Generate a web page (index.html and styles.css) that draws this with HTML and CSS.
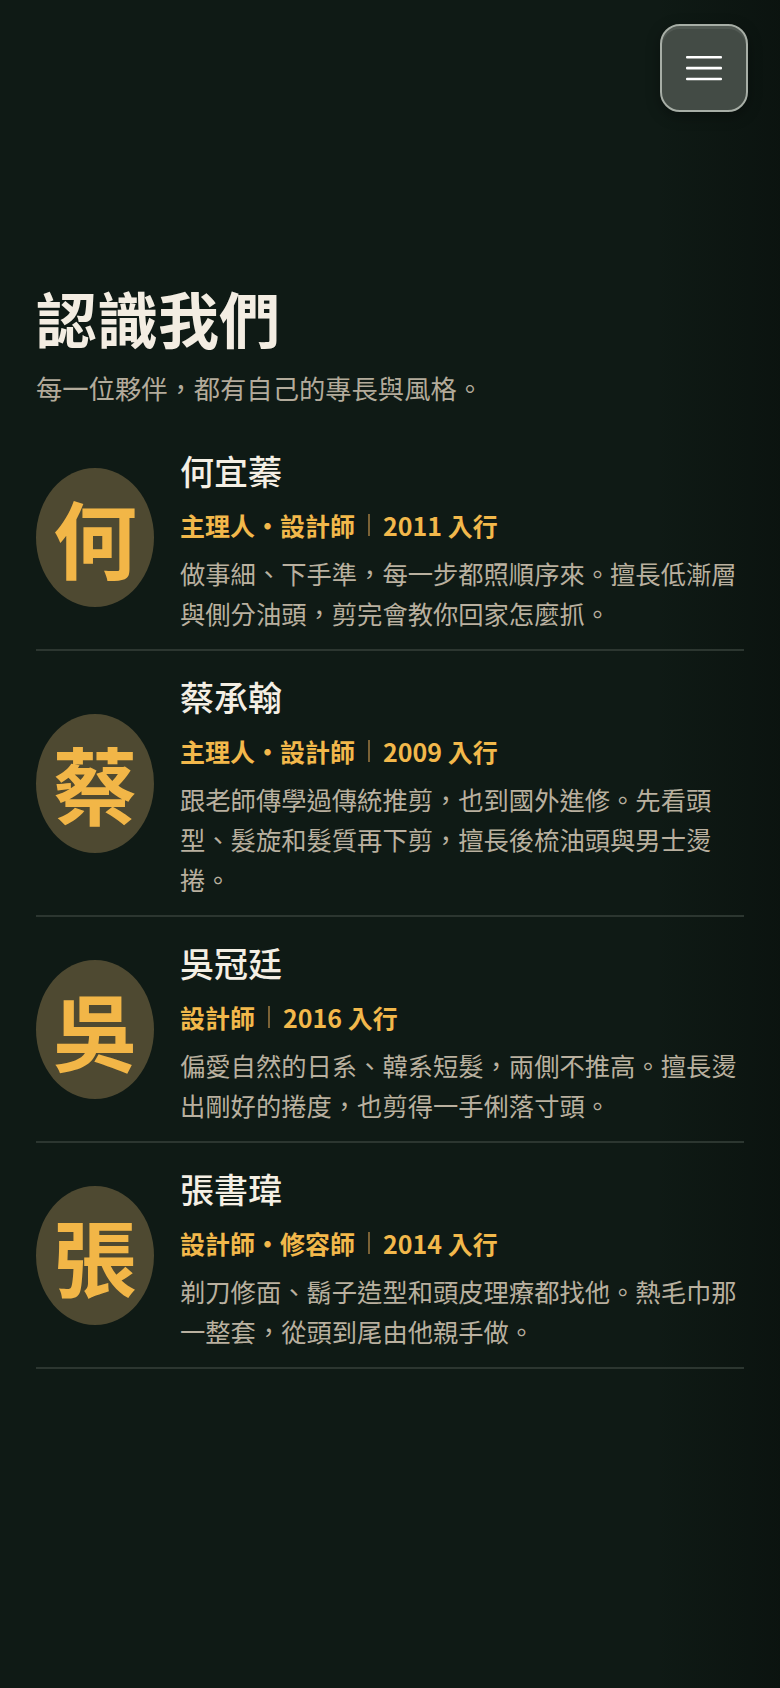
FILE: index.html
```html
<!DOCTYPE html>
<html lang="zh-Hant">
<head>
    <meta charset="utf-8">
    <title>認識我們</title>
    <link rel="stylesheet" href="styles.css">
</head>
<body>
    <header class="topbar">
        <button class="menu-btn" aria-label="選單">
            <svg width="36" height="26" viewBox="0 0 36 26">
                <rect x="0" y="1" width="36" height="2.5" rx="1" fill="#ffffff"/>
                <rect x="0" y="11.8" width="36" height="2.6" rx="1" fill="#ffffff"/>
                <rect x="0" y="22.7" width="36" height="2.5" rx="1" fill="#ffffff"/>
            </svg>
        </button>
    </header>

    <main class="team">
        <h1 class="team-title">認識我們</h1>
        <p class="team-sub">每一位夥伴，都有自己的專長與風格。</p>

        <ul class="member-list">
            <li class="member">
                <div class="avatar">何</div>
                <div class="info">
                    <h2 class="name">何宜蓁</h2>
                    <p class="role">主理人・設計師<span class="bar"></span>2011 入行</p>
                    <p class="desc">做事細、下手準，每一步都照順序來。擅長低漸層與側分油頭，剪完會教你回家怎麼抓。</p>
                </div>
            </li>
            <li class="member">
                <div class="avatar">蔡</div>
                <div class="info">
                    <h2 class="name">蔡承翰</h2>
                    <p class="role">主理人・設計師<span class="bar"></span>2009 入行</p>
                    <p class="desc">跟老師傳學過傳統推剪，也到國外進修。先看頭型、髮旋和髮質再下剪，擅長後梳油頭與男士燙捲。</p>
                </div>
            </li>
            <li class="member">
                <div class="avatar">吳</div>
                <div class="info">
                    <h2 class="name">吳冠廷</h2>
                    <p class="role">設計師<span class="bar"></span>2016 入行</p>
                    <p class="desc">偏愛自然的日系、韓系短髮，兩側不推高。擅長燙出剛好的捲度，也剪得一手俐落寸頭。</p>
                </div>
            </li>
            <li class="member">
                <div class="avatar">張</div>
                <div class="info">
                    <h2 class="name">張書瑋</h2>
                    <p class="role">設計師・修容師<span class="bar"></span>2014 入行</p>
                    <p class="desc">剃刀修面、鬍子造型和頭皮理療都找他。熱毛巾那一整套，從頭到尾由他親手做。</p>
                </div>
            </li>
        </ul>
    </main>
</body>
</html>
```

FILE: styles.css
```css
* {
    box-sizing: border-box;
}
html {
    background: #0f1a15;
}
body {
    margin: 0;
    min-height: 1688px;
    font-family: "Noto Sans CJK TC", "Noto Sans", sans-serif;
    color: #b8b09f;
    background:
        linear-gradient(to right, rgba(8, 14, 11, 0) 84%, rgba(8, 14, 11, 0.55) 100%),
        #0f1a15;
}
.topbar {
    display: flex;
    justify-content: flex-end;
    padding: 24px 32px 0;
}
.menu-btn {
    width: 88px;
    height: 88px;
    display: flex;
    align-items: center;
    justify-content: center;
    padding: 0;
    background: #434b45;
    border: 2px solid #a7aea6;
    border-radius: 20px;
    box-shadow: inset 0 3px 0 rgba(255, 255, 255, 0.08), 0 4px 14px rgba(0, 0, 0, 0.35);
    cursor: pointer;
}
.menu-btn svg {
    display: block;
}
.team {
    padding: 0 36px;
}
.team-title {
    margin: 170px 0 0;
    font-size: 61px;
    line-height: 72px;
    font-weight: 700;
    color: #f3ede2;
}
.team-sub {
    margin: 14px 0 0;
    font-size: 26.3px;
    line-height: 39px;
    color: #b3ab9b;
}
.member-list {
    list-style: none;
    margin: 18px 0 0;
    padding: 0;
}
.member {
    display: flex;
    align-items: center;
    gap: 26px;
    padding: 16px 0;
    border-bottom: 2px solid #2c3630;
}
.avatar {
    flex: 0 0 118px;
    height: 139px;
    border-radius: 50%;
    background: #4e4931;
    color: #f2b647;
    font-size: 84px;
    font-weight: 700;
    display: flex;
    align-items: center;
    justify-content: center;
    line-height: 1;
}
.info {
    flex: 1;
    min-width: 0;
}
.name {
    margin: 0;
    font-size: 34px;
    line-height: 60px;
    font-weight: 500;
    color: #f4efe4;
}
.role {
    margin: 7px 0 0;
    font-size: 25px;
    line-height: 34px;
    font-weight: 700;
    color: #f2b84b;
    display: flex;
    align-items: center;
}
.role .bar {
    display: inline-block;
    width: 2px;
    height: 22px;
    margin: 0 13px;
    background: #7a6236;
}
.desc {
    margin: 11px 0 0;
    font-size: 25.3px;
    line-height: 40px;
    color: #b9b09f;
}
```
